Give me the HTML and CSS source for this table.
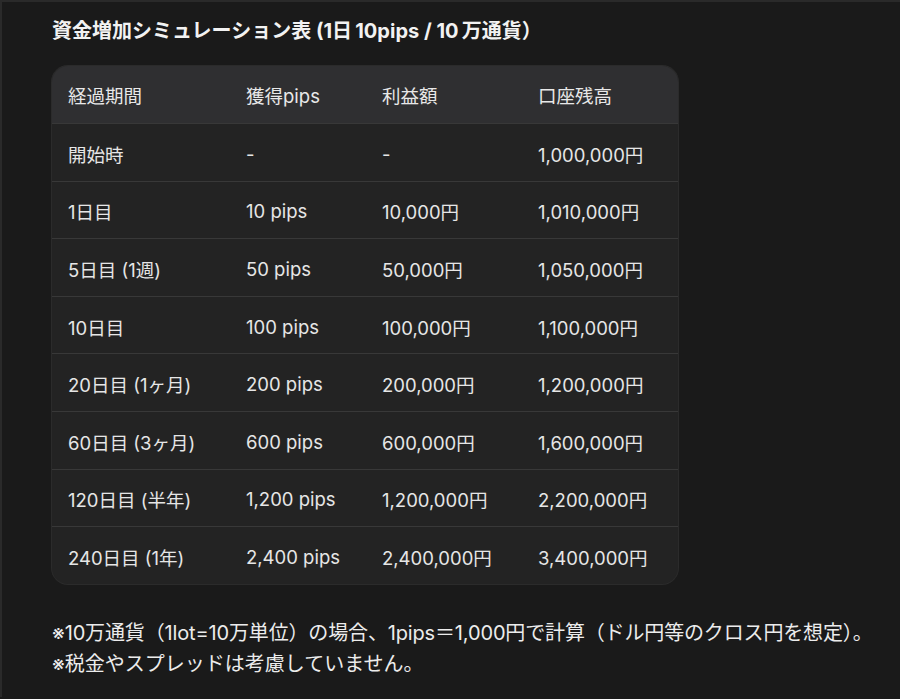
FILE: index.html
```html
<!DOCTYPE html>
<html lang="ja">
<head>
<meta charset="utf-8">
<link rel="stylesheet" href="styles.css">
</head>
<body>
<div class="page">
  <h2 class="title">資金増加シミュレーション表 (1日&#8201;10pips / 10&#8201;万通貨）</h2>
  <div class="table-wrap">
    <table class="sim">
      <colgroup>
        <col class="c1"><col class="c2"><col class="c3"><col class="c4">
      </colgroup>
      <thead>
        <tr><th>経過期間</th><th>獲得pips</th><th>利益額</th><th>口座残高</th></tr>
      </thead>
      <tbody>
        <tr><td>開始時</td><td>-</td><td>-</td><td>1,000,000円</td></tr>
        <tr><td>1日目</td><td>10 pips</td><td>10,000円</td><td>1,010,000円</td></tr>
        <tr><td>5日目 (1週)</td><td>50 pips</td><td>50,000円</td><td>1,050,000円</td></tr>
        <tr><td>10日目</td><td>100 pips</td><td>100,000円</td><td>1,100,000円</td></tr>
        <tr><td>20日目 (1ヶ月)</td><td>200 pips</td><td>200,000円</td><td>1,200,000円</td></tr>
        <tr><td>60日目 (3ヶ月)</td><td>600 pips</td><td>600,000円</td><td>1,600,000円</td></tr>
        <tr><td>120日目 (半年)</td><td>1,200 pips</td><td>1,200,000円</td><td>2,200,000円</td></tr>
        <tr><td>240日目 (1年)</td><td>2,400 pips</td><td>2,400,000円</td><td>3,400,000円</td></tr>
      </tbody>
    </table>
  </div>
  <div class="notes">
    <p class="n1">※10万通貨（1lot=10万単位）の場合、1pips＝1,000円で計算（ドル円等のクロス円を想定）。</p>
    <p>※税金やスプレッドは考慮していません。</p>
  </div>
</div>
</body>
</html>
```
FILE: styles.css
```css
html, body {
  margin: 0;
  padding: 0;
  background: #1a1a1a;
}
body {
  color: #ececec;
  font-family: Inter, "Noto Sans CJK JP", sans-serif;
  font-size: 18.5px;
  border-top: 2px solid #2a2a2a;
  border-left: 2px solid #2a2a2a;
  height: 697px;
  box-sizing: border-box;
}
.page {
  padding: 15px 0 0 50px;
}
.title {
  margin: 0;
  font-size: 20px;
  font-weight: 700;
  line-height: 28px;
  color: #f2f2f2;
}
.table-wrap {
  margin-top: 21px;
  width: 626px;
  border-radius: 16px;
  overflow: hidden;
  background: #232323;
  box-shadow: 0 0 0 1px #2b2b2b;
}
.sim {
  width: 100%;
  border-collapse: collapse;
  table-layout: fixed;
}
.c1 { width: 178px; }
.c2 { width: 136px; }
.c3 { width: 156px; }
.c4 { width: 156px; }
.sim th, .sim td {
  text-align: left;
  padding: 0 16px;
  font-weight: 400;
  white-space: nowrap;
}
.sim th {
  height: 57px;
}
.sim td {
  height: 53.6px;
  padding-top: 3px;
}
.sim thead th {
  background: #2f2f31;
  color: #e8e8e8;
}
.sim tbody td {
  border-top: 1px solid #383838;
  color: #e6e6e6;
}
.notes {
  margin-top: 34px;
  font-size: 20px;
}
.notes p {
  margin: 0;
  line-height: 31px;
  color: #ececec;
  white-space: nowrap;
}
.notes .n1 {
  letter-spacing: -0.15px;
}
```
